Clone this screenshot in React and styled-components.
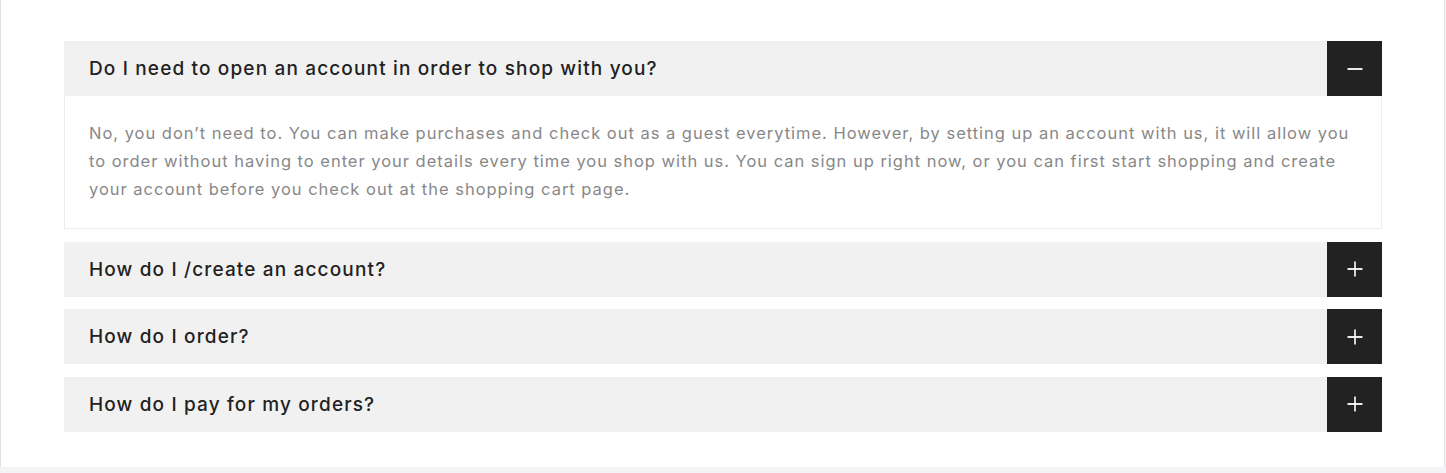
import React, { useState } from "react";
import styled, { createGlobalStyle } from "styled-components";

const GlobalStyle = createGlobalStyle`
  * { box-sizing: border-box; }
  body {
    margin: 0;
    background: #f4f4f6;
    font-family: Inter, "Open Sans", sans-serif;
  }
`;

const Page = styled.div`
  height: 467px;
  background: #fff;
  border-left: 1px solid #e3e3e3;
  border-right: 1px solid #e3e3e3;
  margin-right: 1px;
  padding: 41px 62px 0 63px;
`;

const Accordion = styled.div`
  display: flex;
  flex-direction: column;
  gap: 12.5px;
`;

const Item = styled.div`
  display: flex;
  flex-direction: column;
`;

const Header = styled.button`
  display: flex;
  align-items: center;
  height: 55px;
  padding: 0 0 0 25px;
  border: 0;
  background: #f1f1f1;
  cursor: pointer;
  text-align: left;
  font-family: inherit;
`;

const Title = styled.span`
  flex: 1;
  font-size: 19px;
  font-weight: 500;
  letter-spacing: 1.15px;
  color: #222;
`;

const Toggle = styled.span`
  display: flex;
  align-items: center;
  justify-content: center;
  width: 55px;
  height: 55px;
  background: #222;
`;

const Body = styled.div`
  border: 1px solid #ececec;
  border-top: 0;
  padding: 23px 24px 25px;
  font-size: 16.5px;
  line-height: 28px;
  letter-spacing: 0.98px;
  color: #888;
`;

const Icon = ({ open }) => (
  <svg width="16" height="16" viewBox="0 0 16 16">
    <rect x="0.5" y="7.1" width="15" height="1.8" fill="#fff" />
    {!open && <rect x="7.2" y="0.5" width="1.6" height="15" fill="#fff" />}
  </svg>
);

const faqs = [
  {
    q: "Do I need to open an account in order to shop with you?",
    a: "No, you don’t need to. You can make purchases and check out as a guest everytime. However, by setting up an account with us, it will allow you to order without having to enter your details every time you shop with us. You can sign up right now, or you can first start shopping and create your account before you check out at the shopping cart page.",
  },
  {
    q: "How do I /create an account?",
    a: "Click on the account icon at the top of the page and follow the steps to register.",
  },
  {
    q: "How do I order?",
    a: "Add the products you like to your cart and proceed to checkout.",
  },
  {
    q: "How do I pay for my orders?",
    a: "We accept all major credit cards and PayPal.",
  },
];

export default function App() {
  const [open, setOpen] = useState(0);
  return (
    <>
      <GlobalStyle />
      <Page>
        <Accordion>
          {faqs.map((f, i) => (
            <Item key={i}>
              <Header onClick={() => setOpen(open === i ? -1 : i)}>
                <Title>{f.q}</Title>
                <Toggle>
                  <Icon open={open === i} />
                </Toggle>
              </Header>
              {open === i && <Body>{f.a}</Body>}
            </Item>
          ))}
        </Accordion>
      </Page>
    </>
  );
}
